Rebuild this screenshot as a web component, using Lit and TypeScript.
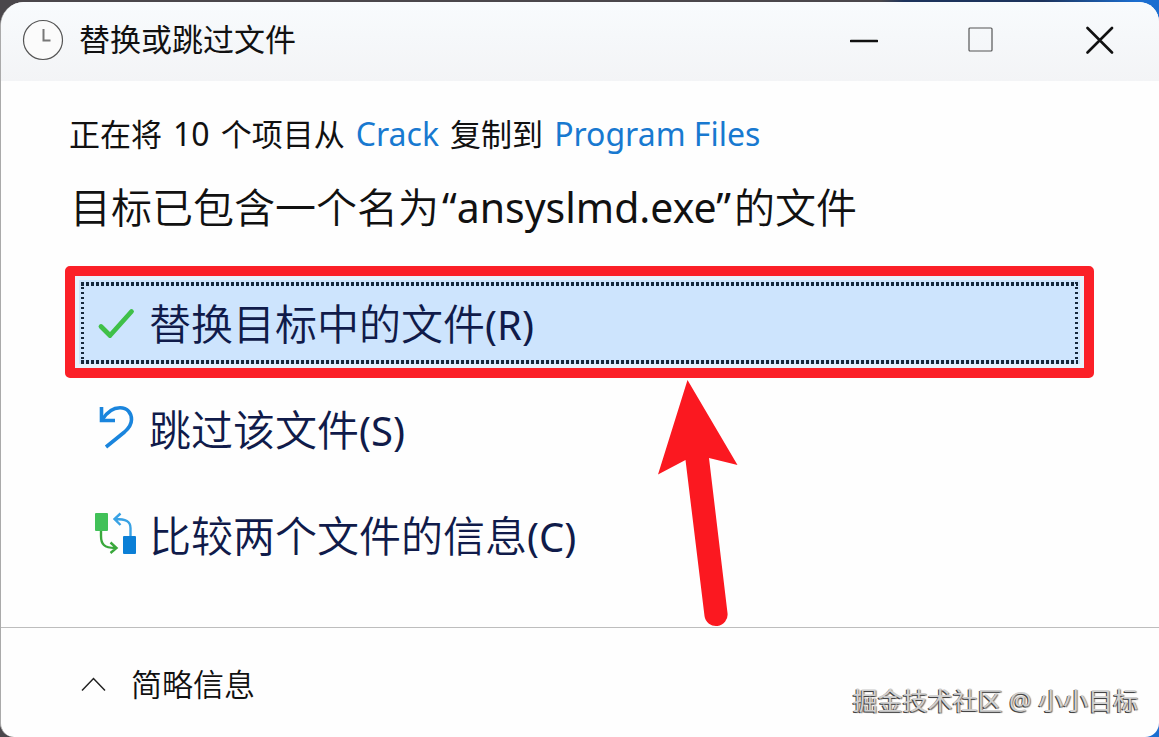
import { LitElement, html, css, svg } from "lit";
import { customElement } from "lit/decorators.js";

const clockIcon = svg`
  <circle cx="21" cy="21" r="19.5" fill="#fbfbfb" stroke="#555" stroke-width="1.2" />
  <path d="M21.500 10v11.500h7" fill="none" stroke="#777" stroke-width="2" />`;

const checkIcon = svg`
  <path d="M6 24.500 15 33.500 36.500 9.500" fill="none" stroke="#3fc048" stroke-width="4.800"
    stroke-linecap="round" stroke-linejoin="round" />`;

const undoIcon = svg`
  <path d="M6.500 1V14.500H20" fill="none" stroke="#1a85dd" stroke-width="3.600" />
  <path d="M7 14C12 6 18 1.800 25 1.800C32.500 1.800 36.500 7 36.500 13.500C36.500 19 33.500 22.500 29.500 26L11 41"
    fill="none" stroke="#1a85dd" stroke-width="3.600" />`;

const compareIcon = svg`
  <rect x="0" y="1" width="13" height="18" rx="1" fill="#41c158" />
  <path d="M6 19V24C6 32 9 36 20 36M15.500 30.500 21.500 36 15.500 41" fill="none" stroke="#3aa83c" stroke-width="2.400" />
  <rect x="28" y="24" width="13" height="18" rx="1" fill="#0b7fd6" />
  <path d="M35.500 24V16C35.500 9.500 31 7 20 7M25.500 1.500 19.500 7 25.500 13" fill="none" stroke="#39a2e4" stroke-width="2.400" />`;

@customElement("app-root")
export class AppRoot extends LitElement {
  static styles = css`
    :host {
      display: block;
      font-family: "Noto Sans", "Noto Sans CJK SC", sans-serif;
      color: #111;
    }
    * {
      box-sizing: border-box;
    }
    .desktop {
      min-height: 100vh;
      display: flex;
      padding-top: 2px;
      background: linear-gradient(90deg, #4a474b 0 76%, #1c335c 78% 90%, #1b6ed0 98%);
    }
    .dialog {
      flex: 1;
      display: flex;
      flex-direction: column;
      border-left: 1px solid #aaa;
      border-radius: 24px 20px 14px 14px;
      background: #fefefe;
      overflow: hidden;
    }
    .titlebar {
      display: flex;
      align-items: center;
      height: 79px;
      padding: 0 0 4px 21px;
      background: linear-gradient(#f8fbfd, #f3f4f6);
    }
    .clock {
      width: 42px;
      height: 42px;
    }
    .title {
      flex: 1;
      margin: 0 0 2px 15px;
      font-size: 31px;
      line-height: 40px;
      font-weight: 400;
    }
    button {
      font: inherit;
      color: inherit;
      border: 0;
      padding: 0;
      background: none;
      cursor: pointer;
    }
    .control {
      width: 118px;
      height: 75px;
      display: grid;
      place-items: center;
    }
    .control svg {
      width: 28px;
      height: 28px;
    }
    .content {
      flex: 1;
      padding: 31px 65px 0 64px;
    }
    .source {
      margin: 0 0 0 4px;
      font-size: 31px;
      line-height: 44px;
      font-weight: 400;
    }
    .name {
      margin: 0 3px;
      font-size: 32px;
      line-height: 40px;
    }
    a {
      color: #1879d0;
      text-decoration: none;
    }
    .heading {
      margin: 21px 0 0 5px;
      font-size: 41px;
      line-height: 60px;
      font-weight: 350;
    }
    .file {
      margin: 0 3px;
      font-weight: 400;
    }
    .frame {
      position: relative;
      margin-top: 29px;
      border: 10px solid #fb2028;
      border-radius: 5px;
    }
    .command {
      display: flex;
      align-items: center;
      gap: 12px;
      width: 100%;
      height: 92px;
      padding-left: 20px;
      font-size: 42px;
      line-height: 60px;
      font-weight: 350;
      color: #101b4a;
      text-align: left;
    }
    .key {
      font-size: 40px;
      line-height: 50px;
      font-weight: 400;
    }
    .command.selected {
      padding-top: 4px;
      outline: 0;
      background:
        repeating-linear-gradient(90deg, #14263a 0 3px, transparent 3px 5px) 6px 6px / calc(100% - 12px) 4px no-repeat,
        repeating-linear-gradient(90deg, #14263a 0 3px, transparent 3px 5px) 6px calc(100% - 4px) / calc(100% - 12px) 4px no-repeat,
        repeating-linear-gradient(#14263a 0 2px, transparent 2px 5px) 6px 6px / 3px calc(100% - 12px) no-repeat,
        repeating-linear-gradient(#14263a 0 2px, transparent 2px 5px) calc(100% - 6px) 6px / 3px calc(100% - 12px) no-repeat,
        #cde4fd;
      box-shadow: inset 0 0 0 4px #e7f1fc;
    }
    .others {
      display: grid;
      gap: 14px;
      padding: 6px 10px 0;
    }
    .icon {
      width: 42px;
      height: 44px;
      flex: none;
    }
    .others .icon {
      margin-bottom: 4px;
    }
    .arrow {
      position: absolute;
      top: 104px;
      left: 57.8%;
      width: 80px;
      height: 248px;
      pointer-events: none;
    }
    .footer {
      display: flex;
      align-items: center;
      justify-content: space-between;
      height: 110px;
      padding: 0 21px 0 80px;
      border-top: 1px solid #bdbdbd;
    }
    .details {
      display: flex;
      align-items: center;
      gap: 25px;
      margin-top: 2px;
      font-size: 31px;
      line-height: 44px;
      font-weight: 350;
    }
    .details svg {
      width: 25px;
      height: 16px;
    }
    .credit {
      margin-top: 34px;
      font-size: 25px;
      line-height: 36px;
      color: #d0d0d0;
      text-shadow: -1px 1px 0 #444, 1px 1px 1px #777;
    }
  `;

  render() {
    return html`
      <div class="desktop">
        <main class="dialog">
          <header class="titlebar">
            <svg class="clock" viewBox="0 0 42 42">${clockIcon}</svg>
            <h1 class="title">替换或跳过文件</h1>
            <button class="control" aria-label="最小化">
              <svg viewBox="0 0 28 28"><path d="M1 15H27" stroke="#111" stroke-width="2.600" stroke-linecap="round" /></svg>
            </button>
            <button class="control" aria-label="最大化">
              <svg viewBox="0 0 28 28"><rect x="1" y="2" width="23" height="23" rx="1" fill="none" stroke="#555" stroke-width="1.200" /></svg>
            </button>
            <button class="control" aria-label="关闭">
              <svg viewBox="0 0 28 28"><path d="M1.500 2 26 26.500M26 2 1.500 26.500" stroke="#111" stroke-width="2.600" stroke-linecap="round" /></svg>
            </button>
          </header>
          <section class="content">
            <p class="source">正在将 <span class="name">10</span> 个项目从 <a class="name" href="#">Crack</a> 复制到 <a class="name" href="#">Program Files</a></p>
            <h2 class="heading">目标已包含一个名为<span class="file">“ansyslmd.exe”</span>的文件</h2>
            <div class="frame">
              <button class="command selected">
                <svg class="icon" viewBox="0 0 42 44">${checkIcon}</svg>
                <span>替换目标中的文件<span class="key">(R)</span></span>
              </button>
              <svg class="arrow" viewBox="0 0 80 248">
                <path d="M29.500 0 79.500 85 51 78 69.500 233A11.500 11.500 0 0 1 46.500 236L27.500 80 0 94.500Z" fill="#fb1820" />
              </svg>
            </div>
            <div class="others">
              <button class="command">
                <svg class="icon" viewBox="0 0 42 44">${undoIcon}</svg>
                <span>跳过该文件<span class="key">(S)</span></span>
              </button>
              <button class="command">
                <svg class="icon" viewBox="0 0 42 44">${compareIcon}</svg>
                <span>比较两个文件的信息<span class="key">(C)</span></span>
              </button>
            </div>
          </section>
          <footer class="footer">
            <button class="details">
              <svg viewBox="0 0 25 16"><path d="M1 14.500 12.500 2.500 24 14.500" fill="none" stroke="#222" stroke-width="1.500" /></svg>简略信息
            </button>
            <span class="credit">掘金技术社区 @ 小小目标</span>
          </footer>
        </main>
      </div>
    `;
  }
}
